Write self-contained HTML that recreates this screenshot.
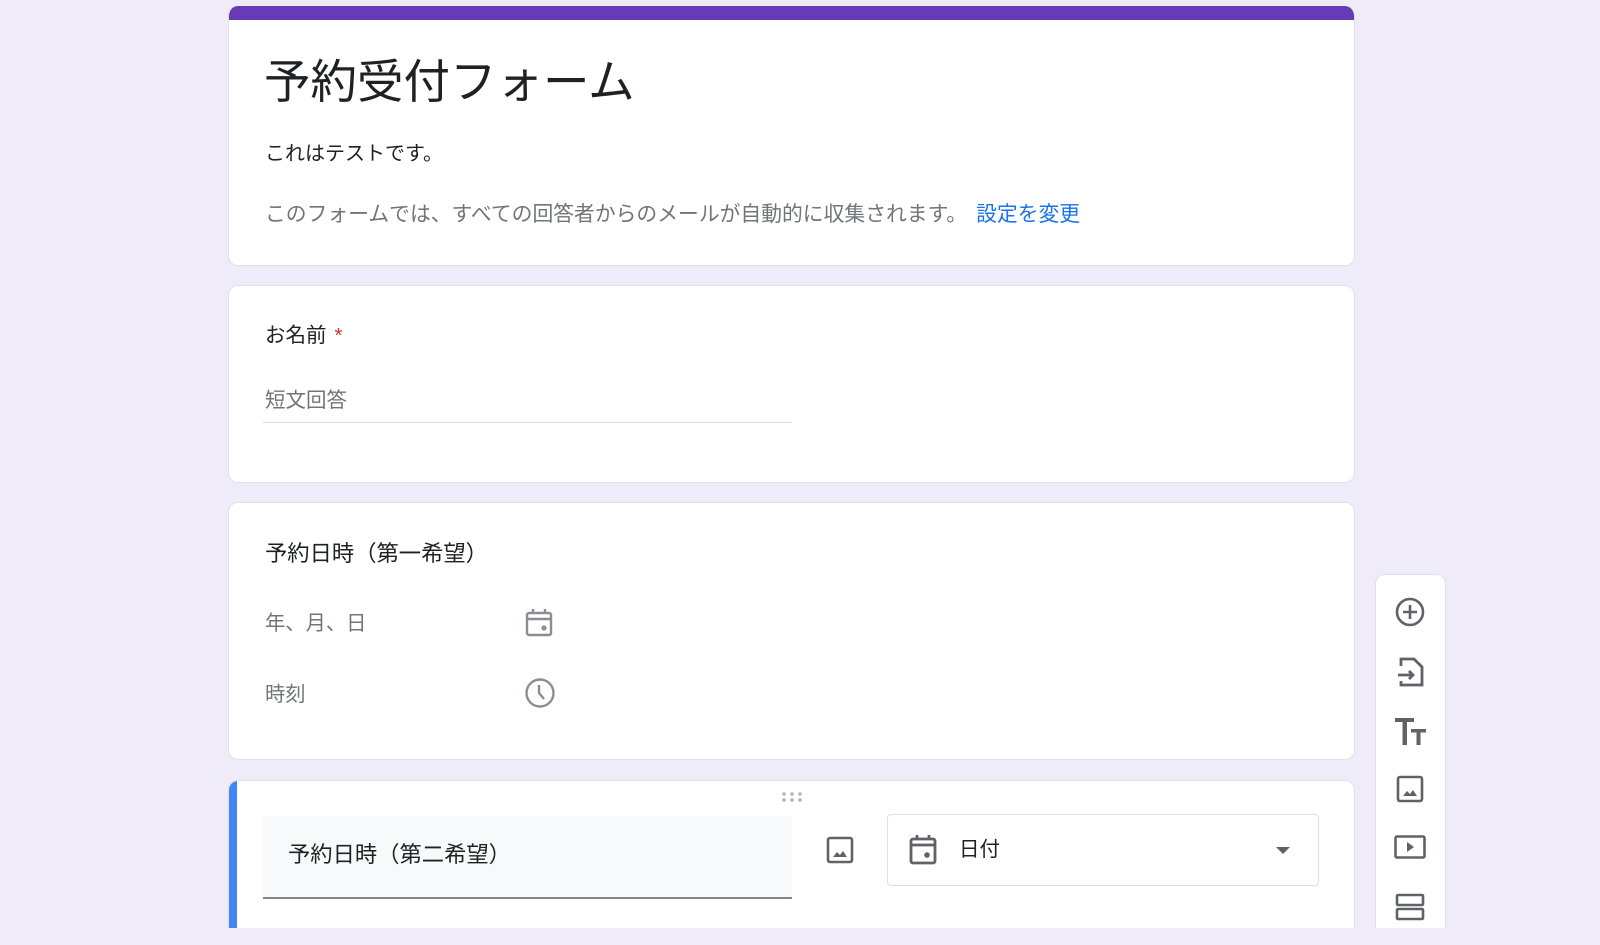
<!DOCTYPE html>
<html><head><meta charset="utf-8">
<style>
*{margin:0;padding:0;box-sizing:border-box}
html,body{width:1600px;height:945px;overflow:hidden}
body{background:#efebf8;position:relative;font-family:"Liberation Sans","Noto Sans CJK JP",sans-serif;color:#202124}
.card{position:absolute;left:228px;width:1127px;background:#fff;border-radius:10px;border:1px solid #e3dfea}
.a{position:absolute;white-space:nowrap}
svg{position:absolute;overflow:visible}
</style></head><body>
<div class="card" style="top:6px;height:260px;border-top:none;overflow:hidden">
  <div style="height:14px;background:#673ab7"></div>
</div>
<div class="a" style="left:264px;top:52px;font-size:46.5px;line-height:60px;color:#202124">予約受付フォーム</div>
<div class="a" style="left:265px;top:141px;font-size:20px;line-height:26px">これはテストです。</div>
<div class="a" style="left:265px;top:202px;font-size:20.8px;line-height:26px;color:#70757a">このフォームでは、すべての回答者からのメールが自動的に収集されます。<span style="color:#1a73e8;margin-left:9px">設定を変更</span></div>

<div class="card" style="top:285px;height:198px"></div>
<div class="a" style="left:265px;top:323px;font-size:20.5px;line-height:26px">お名前<span style="color:#d93025;margin-left:8px">*</span></div>
<div class="a" style="left:265px;top:388px;font-size:20.5px;line-height:26px;color:#70757a">短文回答</div>
<div class="a" style="left:263px;top:422px;width:529px;height:1px;background:#dadce0"></div>

<div class="card" style="top:502px;height:258px"></div>
<div class="a" style="left:265px;top:540px;font-size:22.3px;line-height:28px">予約日時（第一希望）</div>
<div class="a" style="left:265px;top:611px;font-size:20.3px;line-height:26px;color:#70757a">年、月、日</div>
<div class="a" style="left:265px;top:682px;font-size:20.3px;line-height:26px;color:#70757a">時刻</div>
<svg style="left:525px;top:608px" width="28" height="30" viewBox="0 0 28 30"><g fill="none" stroke="#8a8d91" stroke-width="2.4"><rect x="2" y="5" width="24" height="22" rx="2"/><line x1="2" y1="11" x2="26" y2="11"/><line x1="8" y1="1" x2="8" y2="6"/><line x1="20" y1="1" x2="20" y2="6"/></g><circle cx="19" cy="20" r="2.6" fill="#8a8d91"/></svg>
<svg style="left:524px;top:677px" width="32" height="32" viewBox="0 0 32 32"><g fill="none" stroke="#8a8d91" stroke-width="2.4"><circle cx="16" cy="16" r="13.5"/><path d="M15 8v8l5 6"/></g></svg>

<div class="card" style="top:780px;height:160px;overflow:hidden"><div style="position:absolute;left:0;top:0;width:8px;height:100%;background:#4285f4"></div></div>
<svg style="left:782px;top:792px" width="22" height="10"><g fill="#b0b3b8"><circle cx="2" cy="2" r="1.8"/><circle cx="10" cy="2" r="1.8"/><circle cx="18" cy="2" r="1.8"/><circle cx="2" cy="8" r="1.8"/><circle cx="10" cy="8" r="1.8"/><circle cx="18" cy="8" r="1.8"/></g></svg>
<div class="a" style="left:263px;top:816px;width:529px;height:83px;background:#f8f9fa;border-bottom:2px solid #80868b"></div>
<div class="a" style="left:288px;top:841px;font-size:22.3px;line-height:28px">予約日時（第二希望）</div>
<svg style="left:826px;top:836px" width="28" height="28" viewBox="0 0 28 28"><rect x="2" y="2" width="24" height="24" rx="2" fill="none" stroke="#5f6368" stroke-width="2.6"/><path d="M7 21l4-5 3 3 3-4 4 6z" fill="#5f6368"/></svg>
<div class="a" style="left:887px;top:814px;width:432px;height:72px;border:1px solid #e0e0e0;border-radius:4px"></div>
<svg style="left:909px;top:834px" width="28" height="31" viewBox="0 0 28 31"><g fill="none" stroke="#5f6368" stroke-width="2.8"><rect x="2" y="5" width="24" height="24" rx="2"/><line x1="2" y1="11" x2="26" y2="11"/><line x1="8" y1="1" x2="8" y2="6"/><line x1="20" y1="1" x2="20" y2="6"/></g><circle cx="18" cy="21" r="2.8" fill="#5f6368"/></svg>
<div class="a" style="left:959px;top:837px;font-size:20.5px;line-height:26px">日付</div>
<svg style="left:1276px;top:847px" width="14" height="8"><path d="M0 0h14L7 7z" fill="#5f6368"/></svg>

<div class="a" style="left:1375px;top:574px;width:71px;height:370px;background:#fff;border-radius:10px;border:1px solid #e3dfea"></div>
<svg style="left:1395px;top:597px" width="30" height="30" viewBox="0 0 30 30"><g fill="none" stroke="#5f6368" stroke-width="2.6"><circle cx="15" cy="15" r="13"/><path d="M15 8v14M8 15h14"/></g></svg>
<svg style="left:1397px;top:656px" width="28" height="32" viewBox="0 0 28 32"><g fill="none" stroke="#5f6368" stroke-width="2.8"><path d="M4 10V3h13l8 8v18H4v-4"/><path d="M1 19h15M12 15l4 4-4 4"/></g></svg>
<svg style="left:1395px;top:718px" width="32" height="28" viewBox="0 0 32 28"><g fill="#5f6368"><rect x="0" y="0" width="19" height="4"/><rect x="7.5" y="0" width="4.5" height="27"/><rect x="16" y="11" width="15" height="3.5"/><rect x="21.5" y="11" width="4" height="16"/></g></svg>
<svg style="left:1396px;top:775px" width="28" height="28" viewBox="0 0 28 28"><rect x="2" y="2" width="24" height="24" rx="2" fill="none" stroke="#5f6368" stroke-width="2.6"/><path d="M7 21l4-5 3 3 3-4 4 6z" fill="#5f6368"/></svg>
<svg style="left:1394px;top:835px" width="32" height="24" viewBox="0 0 32 24"><rect x="1.5" y="1.5" width="29" height="21" rx="1.5" fill="none" stroke="#5f6368" stroke-width="2.6"/><path d="M13 7l7 5-7 5z" fill="#5f6368"/></svg>
<svg style="left:1395px;top:893px" width="30" height="28" viewBox="0 0 30 28"><g fill="none" stroke="#5f6368" stroke-width="2.6"><rect x="2" y="2" width="26" height="10" rx="1"/><rect x="2" y="16" width="26" height="10" rx="1"/></g></svg>
<div class="a" style="left:0;top:928px;width:1600px;height:17px;background:#efebf8"></div>
</body></html>
